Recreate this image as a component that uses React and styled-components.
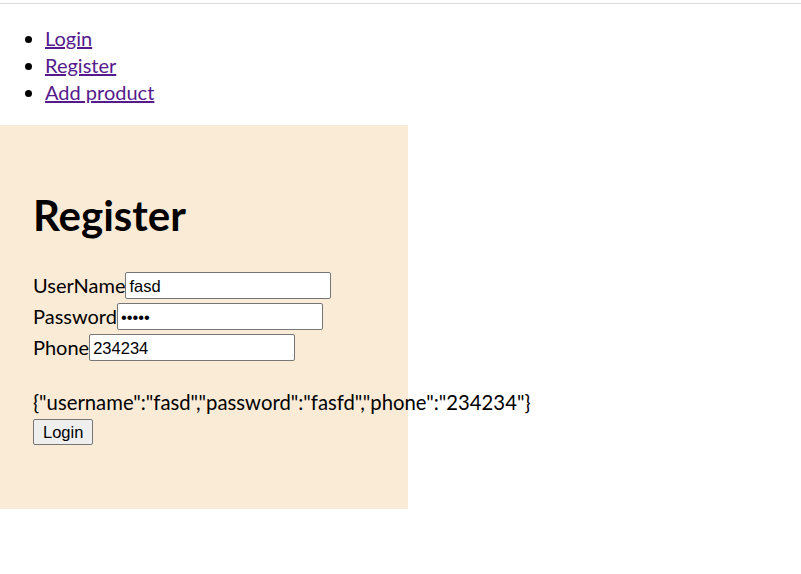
import React from "react";
import styled, { createGlobalStyle } from "styled-components";

const GlobalStyle = createGlobalStyle`
  body {
    margin: 0;
    font-family: Lato, "Noto Sans", sans-serif;
    color: #000;
    background: #fff;
  }
`;

const TopRule = styled.div`
  height: 3px;
  border-bottom: 1px solid #d9d9d9;
`;

const NavList = styled.ul`
  margin: 21px 0 19px;
  padding-left: 45px;
  font-size: 20px;
  line-height: 27px;
`;

const NavLink = styled.a`
  color: #551a8b;
  text-decoration: underline;
`;

const Panel = styled.div`
  width: 408px;
  height: 384px;
  box-sizing: border-box;
  padding: 64px 33px 0;
  background: #faebd7;
  font-size: 20px;
  white-space: nowrap;
`;

const Title = styled.h1`
  margin: 0 0 29px;
  font-size: 42px;
  font-weight: 700;
  line-height: 52px;
`;

const Row = styled.div`
  display: flex;
  align-items: center;
  height: 31px;
`;

const Label = styled.label`
  line-height: 27px;
`;

const Field = styled.input`
  box-sizing: border-box;
  width: 206px;
  height: 27px;
  margin: 0;
  padding: 1px 3px 0;
  border: 1px solid #767676;
  border-radius: 2px;
  font-family: "Liberation Sans", Arial, sans-serif;
  font-size: 16.5px;
  color: #000;
  background: #fff;
`;

const Output = styled.div`
  margin-top: 26px;
  line-height: 27px;
  font-size: 20.3px;
`;

const Button = styled.button`
  margin-top: 3px;
  height: 26px;
  padding: 0 9px;
  border: 1px solid #767676;
  border-radius: 2px;
  background: #efefef;
  font-family: "Liberation Sans", Arial, sans-serif;
  font-size: 16.5px;
  color: #000;
`;

export default function App() {
  const data = { username: "fasd", password: "fasfd", phone: "234234" };
  return (
    <>
      <GlobalStyle />
      <TopRule />
      <NavList>
        <li><NavLink href="#login">Login</NavLink></li>
        <li><NavLink href="#register">Register</NavLink></li>
        <li><NavLink href="#add">Add product</NavLink></li>
      </NavList>
      <Panel>
        <Title>Register</Title>
        <Row>
          <Label>UserName</Label>
          <Field defaultValue={data.username} />
        </Row>
        <Row>
          <Label>Password</Label>
          <Field type="password" defaultValue={data.password} />
        </Row>
        <Row>
          <Label>Phone</Label>
          <Field defaultValue={data.phone} />
        </Row>
        <Output>{JSON.stringify(data)}</Output>
        <Button>Login</Button>
      </Panel>
    </>
  );
}
